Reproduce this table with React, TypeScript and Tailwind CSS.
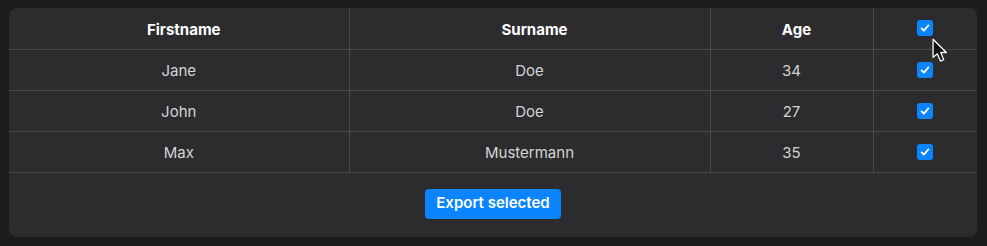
import { useState } from 'react';

interface Person {
  id: number;
  firstname: string;
  surname: string;
  age: number;
}

const PEOPLE: Person[] = [
  { id: 1, firstname: 'Jane', surname: 'Doe', age: 34 },
  { id: 2, firstname: 'John', surname: 'Doe', age: 27 },
  { id: 3, firstname: 'Max', surname: 'Mustermann', age: 35 },
];

function Checkbox({ checked, onChange }: { checked: boolean; onChange: () => void }) {
  return (
    <button
      type="button"
      onClick={onChange}
      className={`w-4 h-4 rounded-[3px] flex items-center justify-center ${
        checked ? 'bg-[#0a84ff]' : 'border border-[#8e8e93] bg-transparent'
      }`}
    >
      {checked && (
        <svg viewBox="0 0 16 16" className="w-3 h-3" fill="none">
          <path d="M3.5 8.5l3 3 6-7" stroke="white" strokeWidth={2.4} strokeLinecap="round" strokeLinejoin="round" />
        </svg>
      )}
    </button>
  );
}

export default function App() {
  const [selected, setSelected] = useState<number[]>(PEOPLE.map((p) => p.id));
  const allSelected = selected.length === PEOPLE.length;

  const toggle = (id: number) =>
    setSelected((s) => (s.includes(id) ? s.filter((x) => x !== id) : [...s, id]));

  const toggleAll = () => setSelected(allSelected ? [] : PEOPLE.map((p) => p.id));

  const cell = 'h-[41px] border-[#4a4a4c] text-center align-middle';
  const head = `${cell} border-b border-r pt-[4px] pl-[10px]`;
  const body = `${cell} border-b border-r pt-[3px]`;

  return (
    <div
      className="w-[987px] h-[246px] bg-[#1c1c1e] pt-2 pl-[9px] pr-[10px]"
      style={{ fontFamily: 'Inter, "Noto Sans", sans-serif' }}
    >
      <div className="relative bg-[#2c2c2e] rounded-lg h-[229px] overflow-hidden">
        <table className="w-full border-collapse table-fixed text-[15px]">
          <colgroup>
            <col className="w-[340px]" />
            <col className="w-[361px]" />
            <col className="w-[163px]" />
            <col />
          </colgroup>
          <thead>
            <tr className="text-white font-semibold">
              <th className={head}>Firstname</th>
              <th className={head}>Surname</th>
              <th className={head}>Age</th>
              <th className={`${cell} border-b`}>
                <div className="flex justify-center">
                  <Checkbox checked={allSelected} onChange={toggleAll} />
                </div>
              </th>
            </tr>
          </thead>
          <tbody className="text-[#d4d4d4]">
            {PEOPLE.map((p) => (
              <tr key={p.id}>
                <td className={body}>{p.firstname}</td>
                <td className={body}>{p.surname}</td>
                <td className={body}>{p.age}</td>
                <td className={`${cell} border-b`}>
                  <div className="flex justify-center">
                    <Checkbox checked={selected.includes(p.id)} onChange={() => toggle(p.id)} />
                  </div>
                </td>
              </tr>
            ))}
          </tbody>
        </table>

        <div className="flex justify-center pt-4">
          <button className="h-[30px] px-[11px] rounded bg-[#0a84ff] text-white text-[15px] font-semibold">
            Export selected
          </button>
        </div>

        {/* pointer hovering the select-all box */}
        <svg
          viewBox="0 0 16 24"
          className="absolute left-[923px] top-[30px] w-[17px] h-[26px] pointer-events-none"
        >
          <path
            d="M1 1 L1 18 L5 14.5 L8 21.5 L11 20.2 L8.2 13.4 L13.5 13.4 Z"
            fill="#111"
            stroke="white"
            strokeWidth={1.2}
            strokeLinejoin="round"
          />
        </svg>
      </div>
    </div>
  );
}
